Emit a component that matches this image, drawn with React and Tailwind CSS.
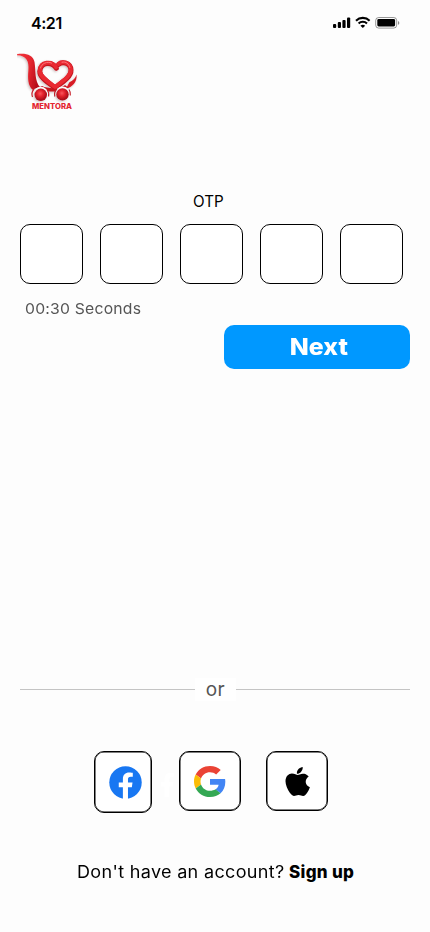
function StatusBar() {
  return (
    <header className="flex h-[46px] items-center justify-between pl-[31px] pr-[30px]">
      <span className="text-[16px] leading-5 font-semibold tracking-[-0.45px]">4:21</span>
      <svg width="67" height="14" viewBox="0 0 67 14">
        <rect x="0" y="8" width="3.2" height="4" rx="1" />
        <rect x="4.8" y="6" width="3.2" height="6" rx="1" />
        <rect x="9.4" y="4" width="3.2" height="8" rx="1" />
        <rect x="14" y="1.6" width="3.2" height="10.4" rx="1" />
        <g fill="none" stroke="#000" strokeWidth="2.1">
          <path d="M23 4.7a9.7 9.7 0 0 1 13.6 0" />
          <path d="M25.6 7.5a6 6 0 0 1 8.4 0" />
        </g>
        <path d="M27.4 9.7a3.6 3.6 0 0 1 4.8 0L29.8 12z" />
        <rect x="42.7" y="1.5" width="21" height="10.6" rx="3" fill="none" stroke="#000" strokeOpacity=".4" />
        <rect x="44.3" y="3.1" width="17.8" height="7.4" rx="1.4" />
        <path d="M65 5v3.8q1.3-.6 1.3-1.9T65 5" fillOpacity=".45" />
      </svg>
    </header>
  );
}

function Logo() {
  return (
    <svg className="block" width="62" height="60" viewBox="0 0 62 60">
      <defs>
        <linearGradient id="red" x1="0" x2="1" y2=".3">
          <stop stopColor="#f3343b" />
          <stop offset=".6" stopColor="#e5262f" />
          <stop offset="1" stopColor="#b80f1b" />
        </linearGradient>
        <radialGradient id="ball" cx=".45" cy=".4">
          <stop stopColor="#fa555c" />
          <stop offset=".5" stopColor="#e3232d" />
          <stop offset="1" stopColor="#b00f1b" />
        </radialGradient>
        <filter id="shadow" x="-20%" y="-20%" width="140%" height="140%">
          <feDropShadow dx="-1" dy="1" stdDeviation="1.2" floodColor="#533" floodOpacity=".3" />
        </filter>
      </defs>
      <g filter="url(#shadow)">
        <path d="M0 1.200C9 0 16 2 17.500 9c1.500 9-.2 19 5.800 25.500-3.500.2-5.300 1.400-7.800 2.200-4.500-4-4.800-11-4.100-19.400C12.200 8 9.500 2.600 0 2.300z" fill="url(#red)" />
        <path d="M59.500 21.500c1 8-4.500 12.500-10.500 14.200l3.400-6.400C56.500 27.600 58.500 25 59.500 21.500" fill="#d81b26" />
        <path d="M25 33C31 36 44 36 48 32L51 34.500q-7 .2-10.500 4H32Q29 35 21 35z" fill="#c5131f" />
        <path d="M39.300 15.200C35 8.300 23.400 8.800 22.800 18.500 22.600 24 30 28.800 38 34.700 46 28.800 54.300 23.500 54 17 53.500 9.500 45 8.300 41.500 11.500" fill="none" stroke="#c5121d" strokeWidth="5" strokeLinecap="round" strokeLinejoin="round" />
        <path d="M39 14.200C35 7.500 23.400 8 22.800 17.800 22.600 23.300 30 28 38 34 46 28 54.200 22.800 53.800 16.300 53 8.800 45 7.800 41.500 11" fill="none" stroke="#e92a33" strokeWidth="4" strokeLinecap="round" strokeLinejoin="round" />
        <path d="M34.500 10C30 8 24.500 10.500 23.500 15M45 9.200C49 8.200 52 11 52.800 14.500" fill="none" stroke="#ff7479" strokeWidth="1" strokeLinecap="round" />
      </g>
      <circle cx="23.800" cy="41.300" r="7.500" fill="#fdfdfd" />
      <circle cx="45.500" cy="41" r="7.500" fill="#fdfdfd" />
      <g fill="none" stroke="#c8202a" strokeWidth="1.200">
        <path d="M15.500 44A8 8 0 0 1 17 36M30 36.500a8 8 0 0 1 1.500 7M37.800 43.500a8 8 0 0 1 2-7.500M52 36.500a8 8 0 0 1 1.300 6" />
      </g>
      <g filter="url(#shadow)" fill="url(#ball)">
        <circle cx="23.800" cy="41.800" r="6.200" />
        <circle cx="45.500" cy="41.400" r="6.200" />
      </g>
      <text x="15" y="56.300" textLength="40" lengthAdjust="spacingAndGlyphs" fill="#e32630" fontFamily="Inter, sans-serif" fontWeight="800" fontSize="7">MENTORA</text>
    </svg>
  );
}

function FacebookIcon() {
  return (
    <svg width="33" height="33" viewBox="0 0 24 24">
      <circle cx="12" cy="12" r="11.800" fill="#1877f2" />
      <path fill="#fff" d="M10.100 24v-8.500h-3V12h3V9.400c0-3 1.800-4.700 4.500-4.700 1.300 0 2.700.2 2.700.2v3h-1.500c-1.500 0-2 .9-2 1.900V12h3.300l-.5 3.500h-2.800V24z" />
    </svg>
  );
}

function GoogleIcon() {
  return (
    <svg width="32" height="31" viewBox="0 0 48 48" preserveAspectRatio="none">
      <path fill="#ea4335" d="M24 9.500c3.540 0 6.710 1.220 9.210 3.600l6.850-6.850C35.900 2.380 30.470 0 24 0 14.620 0 6.510 5.380 2.560 13.220l7.980 6.190C12.430 13.720 17.740 9.500 24 9.500z" />
      <path fill="#4285f4" d="M46.980 24.550c0-1.570-.15-3.090-.38-4.550H24v9.020h12.940c-.58 2.960-2.260 5.480-4.780 7.180l7.730 6c4.510-4.180 7.090-10.360 7.090-17.650z" />
      <path fill="#fbbc05" d="M10.530 28.590c-.48-1.450-.76-2.990-.76-4.590s.27-3.140.76-4.590l-7.980-6.190C.92 16.460 0 20.120 0 24s.92 7.540 2.560 10.780z" />
      <path fill="#34a853" d="M24 48c6.480 0 11.930-2.130 15.890-5.810l-7.730-6c-2.150 1.450-4.920 2.300-8.160 2.300-6.260 0-11.570-4.220-13.470-9.910l-7.980 6.190C6.510 42.620 14.620 48 24 48z" />
    </svg>
  );
}

function AppleIcon() {
  return (
    <svg width="25" height="29" viewBox="0 0 25 29">
      <path d="M17.700 0c.2 2-.6 3.600-1.700 4.900-1.100 1.200-2.700 1.900-4.100 1.800-.2-1.700.6-3.500 1.600-4.600C14.600.9 16.300.1 17.700 0M12.700 8c1.100 0 3-1.500 5.700-1.300 1 0 3.600.4 5.300 2.900-4.500 2.900-3.700 8.900 1.200 10.700-.7 2-1.600 3.900-2.900 5.700-1.100 1.500-2.100 2.900-3.900 2.900-1.700 0-2.300-1-4.500-1-2.300 0-2.900 1-4.600 1-1.700.1-3-1.600-4.200-3.100C2.400 22.700.5 17.300.5 14.300c0-5 3.200-7.600 6.400-7.700 2.700 0 4.700 1.400 5.800 1.400" />
    </svg>
  );
}

export default function App() {
  return (
    <main className="flex h-[932px] w-[430px] flex-col overflow-hidden bg-[#fdfdfd] font-[Inter,sans-serif] text-black">
      <StatusBar />
      <div className="mt-[7px] pl-[17px]">
        <Logo />
      </div>
      <div className="mt-[79px] pl-[193px] text-[15.200px] leading-5">OTP</div>
      <div className="mt-3 flex gap-[17px] pl-5">
        {[0, 1, 2, 3, 4].map((i) => (
          <input key={i} aria-label={`Digit ${i + 1}`} maxLength={1} className="h-[60px] w-[63px] rounded-[10px] border border-black bg-white text-center text-2xl" />
        ))}
      </div>
      <div className="mt-[15px] ml-[25px] origin-left scale-x-[1.05] text-[15px] leading-5 tracking-[0.2px] text-[#555]">00:30 Seconds</div>
      <button className="mt-1.5 mr-5 h-11 w-[186px] self-end rounded-[10px] bg-[#0098ff] pl-[3px] text-[23px] font-extrabold text-white">
        <span className="inline-block scale-x-[1.08]">Next</span>
      </button>
      <div className="mt-[309px] flex h-[23px] items-center px-5">
        <span className="h-px w-[175px] bg-[#c4c4c4]" />
        <span className="w-[41px] bg-white text-center text-[19px] leading-[23px] tracking-[0.6px] text-[#555]">or</span>
        <span className="h-px flex-1 bg-[#c4c4c4]" />
      </div>
      <div className="mt-[50px] flex h-[62px] items-start pl-[94px]">
        <button className="flex h-[62px] w-[58px] items-center justify-center rounded-[10px] border border-black bg-white pl-1 shadow-[inset_0_0_0_0.5px_#000]">
          <FacebookIcon />
        </button>
        <svg className="mt-5 mr-[5px] ml-[8px]" width="14" height="27" viewBox="6.500 4 11 20">
          <path fill="#fff" d="M10.100 23.800v-8.300h-3V12h3V9.400c0-3 1.800-4.700 4.500-4.700 1.300 0 2.700.2 2.700.2v3h-1.500c-1.500 0-2 .9-2 1.900V12h3.300l-.5 3.500h-2.800v8.300z" />
        </svg>
        <button className="flex h-[60px] w-[62px] items-center justify-center rounded-[10px] border border-black bg-white shadow-[inset_0_0_0_0.5px_#000]">
          <GoogleIcon />
        </button>
        <button className="ml-[25px] flex h-[60px] w-[62px] items-center justify-center rounded-[10px] border border-black bg-white shadow-[inset_0_0_0_0.5px_#000]">
          <AppleIcon />
        </button>
      </div>
      <p className="mt-[47px] flex pl-[77px] text-[17px] leading-6">
        <span className="w-[212px] whitespace-nowrap">
          <span className="inline-block origin-left scale-x-[1.06] tracking-[0.3px]">Don't have an account?</span>
        </span>
        <a href="#" className="font-extrabold tracking-[0.3px]">Sign up</a>
      </p>
    </main>
  );
}
